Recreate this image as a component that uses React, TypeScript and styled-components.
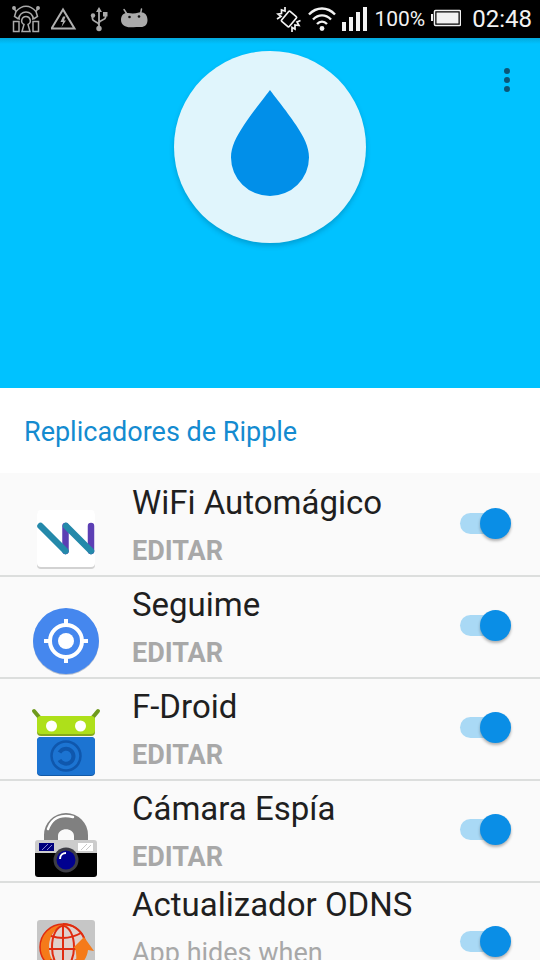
import React from "react";
import styled, { createGlobalStyle } from "styled-components";

const GlobalStyle = createGlobalStyle`
  * { box-sizing: border-box; }
  body {
    margin: 0;
    background: #fafafa;
    font-family: Roboto, "Noto Sans", sans-serif;
  }
`;

const Screen = styled.div`
  display: flex;
  flex-direction: column;
  height: 100vh;
  overflow: hidden;
`;

const StatusBar = styled.header`
  display: flex;
  flex: none;
  align-items: center;
  justify-content: space-between;
  height: 38px;
  padding: 0 8px 0 12px;
  background: #000;
  color: #f2f2f2;
`;

const StatusGroup = styled.div<{ $gap: number }>`
  display: flex;
  align-items: center;
  gap: ${(p) => p.$gap}px;
`;

const StatusText = styled.span`
  font-size: 21px;
  line-height: 38px;
`;

const Clock = styled.time`
  padding-left: 5px;
  font-size: 24px;
  line-height: 38px;
`;

const Banner = styled.section`
  display: grid;
  flex: none;
  grid-template-columns: 1fr auto 1fr;
  align-items: start;
  height: 350px;
  padding: 13px 12px 0;
  background: linear-gradient(#04a9dc, #00c2ff 6px);
`;

const Logo = styled.div`
  display: flex;
  grid-column: 2;
  width: 192px;
  height: 192px;
  border-radius: 50%;
  background: #e0f5fc;
  box-shadow: 0 3px 5px rgba(0, 60, 90, 0.25);
`;

const MenuButton = styled.button`
  display: flex;
  justify-self: end;
  align-items: center;
  justify-content: center;
  width: 42px;
  height: 58px;
  padding: 0;
  border: 0;
  background: none;
`;

const SectionTitle = styled.h1`
  flex: none;
  margin: 0;
  padding: 24px 24px 21px;
  background: #fff;
  color: #148bd0;
  font-size: 27px;
  font-weight: 400;
  line-height: 40px;
`;

const List = styled.ul`
  flex: none;
  margin: 0;
  padding: 2px 0 0;
  list-style: none;
`;

const Row = styled.li<{ $tall?: boolean }>`
  display: flex;
  align-items: center;
  height: ${(p) => (p.$tall ? 122 : 102)}px;
  padding: 0 29px 0 30px;
  border-bottom: 2px solid #dcdedd;
`;

const AppIcon = styled.div`
  display: flex;
  flex: none;
  align-self: flex-start;
  padding-top: 28px;
`;

const Texts = styled.div<{ $tall?: boolean }>`
  display: flex;
  flex: 1;
  flex-direction: column;
  align-items: flex-start;
  align-self: flex-start;
  gap: 8px;
  min-width: 0;
  padding: ${(p) => (p.$tall ? 2 : 8)}px 20px 0 30px;
`;

const AppName = styled.label`
  color: #1f1f1f;
  font-size: 33px;
  line-height: 40px;
`;

const EditButton = styled.button`
  padding: 0;
  border: 0;
  background: none;
  color: #a8a8a8;
  font-family: inherit;
  font-size: 27px;
  font-weight: 700;
  line-height: 40px;
`;

const Description = styled.p`
  margin: 0;
  color: #a8a8a8;
  font-size: 27px;
  line-height: 40px;
`;

const Toggle = styled.input`
  display: flex;
  flex: none;
  align-items: center;
  width: 51px;
  height: 21px;
  margin: 0 0 4px;
  border-radius: 11px;
  appearance: none;
  background: #bcbcbc;

  &::before {
    content: "";
    width: 31px;
    height: 31px;
    border-radius: 50%;
    background: #f4f4f4;
    box-shadow: 0 2px 3px rgba(0, 0, 0, 0.3);
  }

  &:checked {
    justify-content: flex-end;
    background: #a9d9f5;
  }

  &:checked::before {
    background: #0a8ee6;
  }
`;

const TorIcon = () => (
  <svg width="28" height="28" viewBox="0 0 28 28" fill="none" stroke="#a9a9a9" strokeWidth="1.5">
    <path d="M4 6.500C7 3 10.500 1.200 14 1.200S21 3 24 6.500M4 6.500 2.500 11.500l4 2.500M24 6.500l1.500 5-4 2.500" />
    <path d="M6.500 14c1-4.500 3.500-7 7.500-7s6.500 2.500 7.500 7M4 6.500 1.500 2.500M24 6.500l2.500-4" />
    <path d="M1.500 16.500h5.500v10H1.500zM21 16.500h5.500v10H21z" />
    <path d="M12 19.500c-4-2-2.500-8 2-8s6 6 2 8l2 7h-8z" />
    <path d="M6.500 14h1.500M20 14h1.500" />
    <circle cx="2" cy="3" r="1.200" fill="#a9a9a9" />
    <circle cx="26" cy="3" r="1.200" fill="#a9a9a9" />
  </svg>
);

const WarningIcon = () => (
  <svg width="28" height="24" viewBox="0 0 28 24">
    <path d="M12 2.500.500 21.500h23z" fill="none" stroke="#b0b0b0" strokeWidth="2" />
    <path d="m12 9.500-2.500 5.500H12l-1.500 5 4.500-6.500h-2l1.500-4z" fill="#b0b0b0" />
  </svg>
);

const UsbIcon = () => (
  <svg width="20" height="26" viewBox="0 0 20 26" fill="#aaa">
    <path d="M9 4v18M2.500 10v3c0 2.500 6.500 3 6.500 6M15.500 9v2.500c0 2.500-6.500 2.500-6.500 5.500" fill="none" stroke="#aaa" strokeWidth="1.800" />
    <path d="m9 1 3 5H6z" />
    <circle cx="9" cy="22.500" r="2.700" />
    <circle cx="3" cy="9.500" r="2.200" />
    <path d="M13 6h4.500v4.500H13z" />
  </svg>
);

const DroidIcon = () => (
  <svg width="28" height="22" viewBox="0 0 28 22">
    <path d="m6 6-3-4.500M19.500 6l1-5" stroke="#aaa" strokeWidth="1.500" strokeLinecap="round" />
    <path d="M0 12C0 7 3 4.500 7 5c4 .6 7 .6 11-.5 5-1 8.500 2 8.500 7.500 0 5-3 7.500-8 7-4-.3-6 0-9 .3C5 19.500 0 17 0 12z" fill="#aaa" />
    <circle cx="8.500" cy="9" r="1.300" fill="#111" />
    <circle cx="18" cy="8.500" r="1.300" fill="#111" />
  </svg>
);

const VibrateIcon = () => (
  <svg width="26" height="26" viewBox="0 0 26 26" fill="none" stroke="#f2f2f2" strokeWidth="1.700">
    <rect x="8" y="6.500" width="10" height="13" rx="1" transform="rotate(40 13 13)" />
    <path d="M9 1v4L5.500 4v3.500L2 8l3 2.500L1 13M16 26v-4.500l3 1.500v-4l4 .5-2-3.500 3.500-1.500" />
  </svg>
);

const WifiIcon = () => (
  <svg width="28" height="26" viewBox="0 0 28 26" fill="none" stroke="#f2f2f2" strokeWidth="2.400">
    <path d="M1 8.500C8.500.5 19.500.5 27 8.500M5 13.500c5.500-5.500 12.500-5.500 18 0M9 18c3-3 7-3 10 0" />
    <circle cx="14" cy="22.500" r="2.400" fill="#f2f2f2" stroke="none" />
  </svg>
);

const SignalIcon = () => (
  <svg width="26" height="24" viewBox="0 0 26 24" fill="#f2f2f2">
    <path d="M0 15h4v9H0zM7 10h4v14H7zM14 5h4v19h-4zM21 0h4v24h-4z" />
  </svg>
);

const BatteryIcon = () => (
  <svg width="30" height="20" viewBox="0 0 30 20">
    <path d="M0 5h2v7H0z" fill="#f2f2f2" />
    <rect x="3.500" y="1.500" width="26" height="15" rx="1" fill="none" stroke="#f2f2f2" strokeWidth="1.500" />
    <path d="M5.500 3.500h22v11h-22z" fill="#f2f2f2" />
  </svg>
);

const DropLogo = () => (
  <svg width="192" height="192" viewBox="0 0 192 192">
    <path d="M96 39C94 42 80 59 70 74c-8 12-13 22-13 32.500a39 38.500 0 0 0 78 0C135 96 130 86 122 74 112 59 98 42 96 39z" fill="#018fe9" />
  </svg>
);

const DotsIcon = () => (
  <svg width="8" height="26" viewBox="0 0 8 26" fill="#0b5577">
    <circle cx="4" cy="4" r="3" />
    <circle cx="4" cy="13" r="3" />
    <circle cx="4" cy="22" r="3" />
  </svg>
);

const WifiAutoIcon = () => (
  <svg width="72" height="72" viewBox="0 0 72 72">
    <rect x="7" y="8" width="58" height="58" rx="4" fill="#d2d2d2" />
    <rect x="7" y="7" width="58" height="57" rx="4" fill="#fff" />
    <g strokeWidth="6.500" strokeLinecap="round">
      <path d="M35.500 23v25M61 23v25" stroke="#5c3fb4" />
      <path d="m10.500 23 25 25M36 23l25 25" stroke="#2489aa" />
    </g>
  </svg>
);

const LocateIcon = () => (
  <svg width="72" height="72" viewBox="0 0 72 72">
    <circle cx="36" cy="37" r="33" fill="#b9c2d0" />
    <circle cx="36" cy="36" r="33" fill="#4587ee" />
    <circle cx="36" cy="36" r="16" fill="none" stroke="#fff" strokeWidth="4" />
    <circle cx="36" cy="36" r="8" fill="#fff" />
    <path d="M36 14v7M36 51v7M14 36h7M51 36h7" stroke="#fff" strokeWidth="4" />
  </svg>
);

const FdroidIcon = () => (
  <svg width="72" height="72" viewBox="0 0 72 72">
    <path d="m4 4 5 6M68 4l-5 6" stroke="#6f9a1d" strokeWidth="4" strokeLinecap="round" />
    <rect x="7" y="9" width="58" height="20" rx="4" fill="#86a91c" />
    <rect x="7" y="9" width="58" height="18" rx="4" fill="#aee01a" />
    <circle cx="21.500" cy="19" r="5.500" fill="#fff" />
    <circle cx="50.500" cy="19" r="5.500" fill="#fff" />
    <rect x="7" y="30" width="58" height="39" rx="4" fill="#1259a6" />
    <rect x="7" y="30" width="58" height="38" rx="4" fill="#1c74d2" />
    <g fill="none" stroke="#0f57ad">
      <circle cx="36" cy="49" r="14.500" strokeWidth="2.500" />
      <path d="M29.500 45.500a7.500 7.500 0 1 1 0 7.500" strokeWidth="4" />
    </g>
  </svg>
);

const CameraIcon = () => (
  <svg width="72" height="72" viewBox="0 0 72 72">
    <path d="M14 34V26a22 22 0 0 1 44 0v8H44V27c0-9-16-9-16 0v7z" fill="#808080" />
    <path d="M18 20C22 9 31 5 43 8" fill="none" stroke="#fff" strokeWidth="2.500" strokeLinecap="round" />
    <path d="M8 31h56q3 0 3 3v12H5V34q0-3 3-3z" fill="#ccc" />
    <path d="M5 44h62v21q0 3-3 3H8q-3 0-3-3z" fill="#000" />
    <path d="M9 34h15v8H9z" fill="#00007d" />
    <path d="M48 34h15v8H48z" fill="#fff" />
    <path d="m12 41 6-6M17 41l5-5" stroke="#8a8ad0" strokeWidth="1" />
    <path d="m51 41 6-6M56 41l5-5" stroke="#c8c8c8" strokeWidth="1" />
    <circle cx="36" cy="51" r="12.500" fill="#3d3d45" />
    <circle cx="36" cy="51" r="9.500" fill="#00008f" />
    <path d="M30 50c0-4 3-6 6-6" fill="none" stroke="#fff" strokeWidth="2" />
  </svg>
);

const GlobeIcon = () => (
  <svg width="72" height="72" viewBox="0 0 72 72">
    <rect x="7" y="9" width="58" height="58" rx="3" fill="#c6c6c6" />
    <circle cx="33" cy="36" r="23" fill="#f57a19" stroke="#e02b10" strokeWidth="1.500" />
    <path d="M37 15c-10-1-18 9-18 21s6 19 16 21c10-2 16-9 18-18l1-12C50 19 44 15 37 15z" fill="#e0d0cc" />
    <g fill="none" stroke="#e02b10" strokeWidth="2">
      <path d="M33 13a23 23 0 0 1 21 14" />
      <ellipse cx="33" cy="36" rx="11" ry="21" />
      <path d="M33 14v44M19 38h27M21 25q16 5 30-3M20 49q14 5 27 0" />
    </g>
    <path d="M43 37 54 26l10 14-6-1c-1 9-7 16-15 19 4-7 4-14 2-21z" fill="#f57a19" />
  </svg>
);

type Replicator = {
  id: string;
  name: string;
  Icon: React.ComponentType;
  description?: string;
};

const replicators: Replicator[] = [
  { id: "wifi", name: "WiFi Automágico", Icon: WifiAutoIcon },
  { id: "follow", name: "Seguime", Icon: LocateIcon },
  { id: "fdroid", name: "F-Droid", Icon: FdroidIcon },
  { id: "camera", name: "Cámara Espía", Icon: CameraIcon },
  { id: "odns", name: "Actualizador ODNS", Icon: GlobeIcon, description: "App hides when" },
];

export default function App() {
  return (
    <>
      <GlobalStyle />
      <Screen>
        <StatusBar>
          <StatusGroup $gap={11}>
            <TorIcon />
            <WarningIcon />
            <UsbIcon />
            <DroidIcon />
          </StatusGroup>
          <StatusGroup $gap={6}>
            <VibrateIcon />
            <WifiIcon />
            <SignalIcon />
            <StatusText>100%</StatusText>
            <BatteryIcon />
            <Clock>02:48</Clock>
          </StatusGroup>
        </StatusBar>
        <Banner>
          <Logo>
            <DropLogo />
          </Logo>
          <MenuButton aria-label="Menú">
            <DotsIcon />
          </MenuButton>
        </Banner>
        <SectionTitle>Replicadores de Ripple</SectionTitle>
        <List>
          {replicators.map(({ id, name, Icon, description }) => (
            <Row key={id} $tall={Boolean(description)}>
              <AppIcon>
                <Icon />
              </AppIcon>
              <Texts $tall={Boolean(description)}>
                <AppName htmlFor={id}>{name}</AppName>
                {description ? <Description>{description}</Description> : <EditButton>EDITAR</EditButton>}
              </Texts>
              <Toggle id={id} type="checkbox" role="switch" defaultChecked />
            </Row>
          ))}
        </List>
      </Screen>
    </>
  );
}
